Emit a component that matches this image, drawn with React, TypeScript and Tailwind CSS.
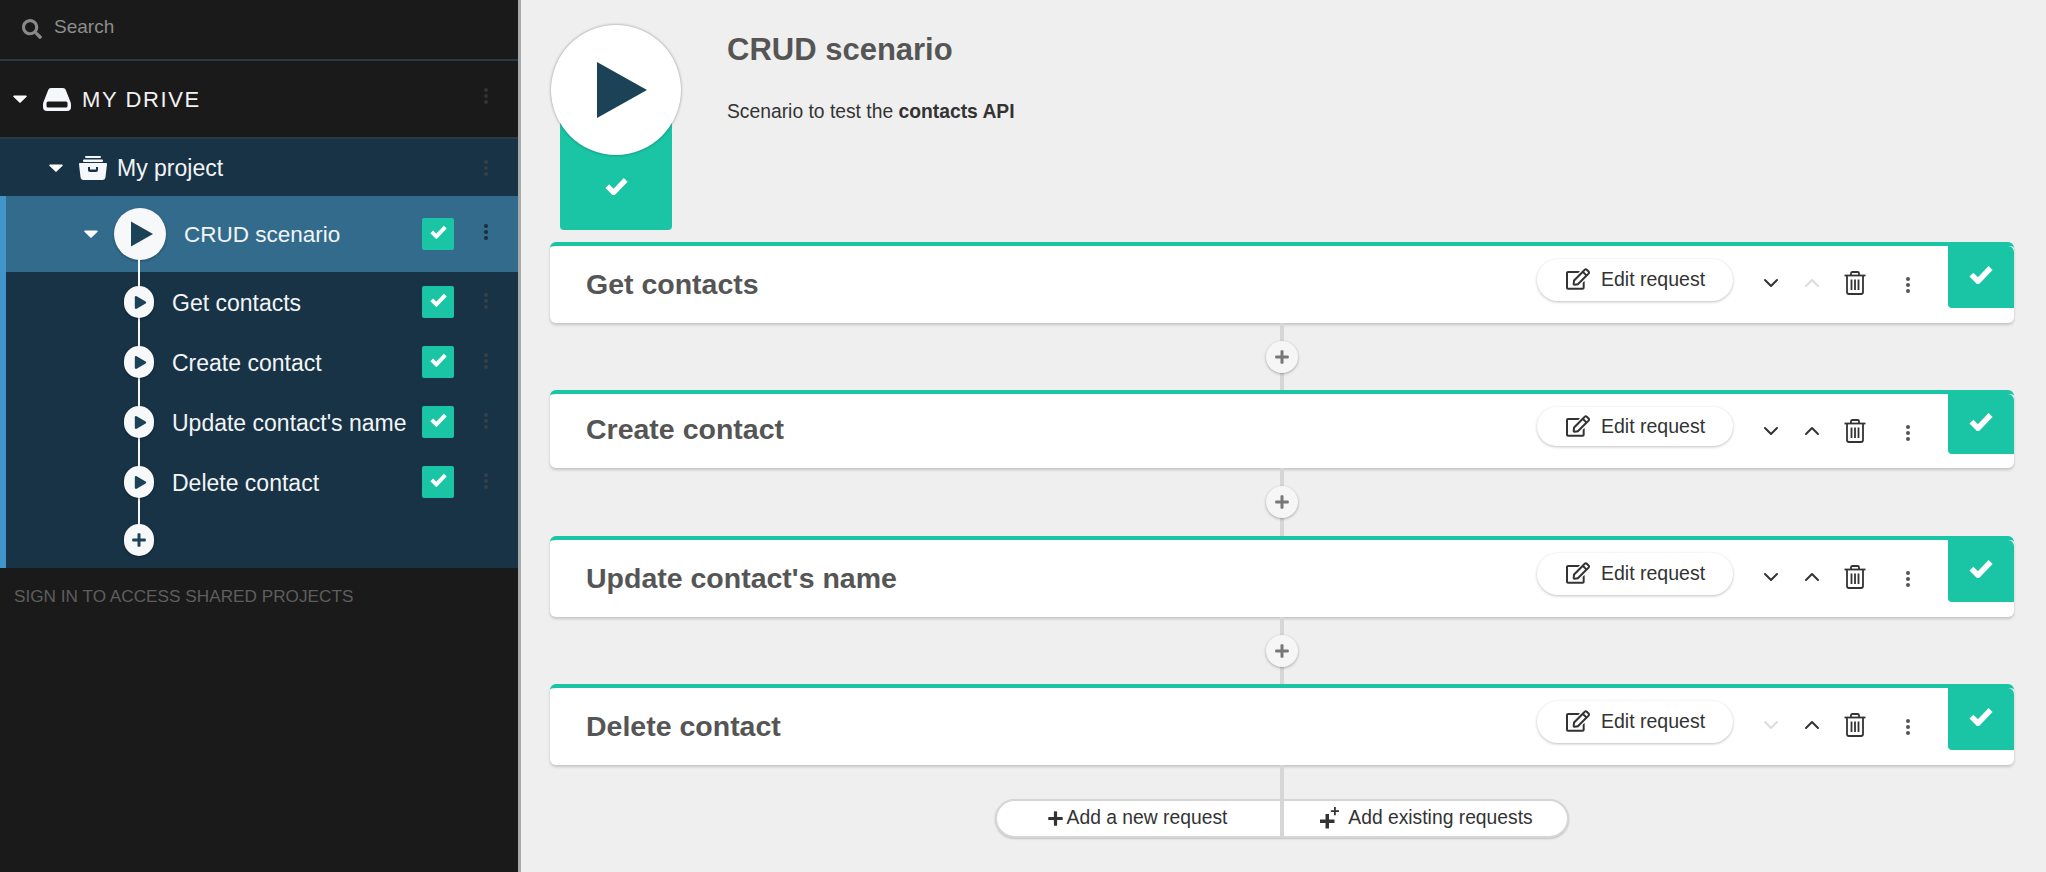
import { FaPlay, FaRegEdit, FaSearch } from "react-icons/fa";
import { ChevronDown, ChevronUp } from "lucide-react";

const sans = "font-['Liberation_Sans',Arial,sans-serif]";

const steps = ["Get contacts", "Create contact", "Update contact's name", "Delete contact"];

function Caret() {
  return (
    <svg width="14" height="8" viewBox="0 0 14 8" className="shrink-0">
      <path d="M1 0.5h12a.8.8 0 0 1 .6 1.3L7.6 7.6a.8.8 0 0 1-1.2 0L.4 1.8A.8.8 0 0 1 1 .5z" fill="#fff" />
    </svg>
  );
}

function Kebab({ color }: { color: string }) {
  return (
    <svg width="6" height="18" viewBox="0 0 6 18" fill={color}>
      <circle cx="3" cy="3" r="2" />
      <circle cx="3" cy="9" r="2" />
      <circle cx="3" cy="15" r="2" />
    </svg>
  );
}

function Plus({ size, color }: { size: number; color: string }) {
  return (
    <svg width={size} height={size} viewBox="0 0 14 14" fill={color}>
      <path d="M5.500 1a.8.8 0 0 1 .8-.8h1.400a.8.8 0 0 1 .8.8v4.500H13a.8.8 0 0 1 .8.8v1.400a.8.8 0 0 1-.8.8H8.500V13a.8.8 0 0 1-.8.8H6.300a.8.8 0 0 1-.8-.8V8.500H1a.8.8 0 0 1-.8-.8V6.300a.8.8 0 0 1 .8-.8h4.500z" />
    </svg>
  );
}

function Check({ size }: { size: number }) {
  return (
    <svg width={size} height={size * 0.8} viewBox="0 0 20 16" fill="none" stroke="#fff" strokeWidth="4.600">
      <path d="M2 8l5.500 5.500L18 2.500" />
    </svg>
  );
}

function DriveIcon() {
  return (
    <svg width="28" height="24" viewBox="0 0 28 24" fill="#f5f7fa">
      <path
        fillRule="evenodd"
        d="M8 1h12c1.300 0 2.300.7 2.800 2L27.500 15c.3.800.5 1.500.5 2.500V20a4 4 0 0 1-4 4H4a4 4 0 0 1-4-4v-2.500c0-1 .2-1.700.5-2.500L5.200 3C5.700 1.700 6.700 1 8 1zM5 14.500a1.500 1.500 0 0 0-1.500 1.500v3A1.500 1.500 0 0 0 5 20.500h18a1.500 1.500 0 0 0 1.500-1.500v-3a1.500 1.500 0 0 0-1.500-1.500z"
      />
    </svg>
  );
}

function ProjectIcon() {
  return (
    <svg width="28" height="24" viewBox="0 0 28 24" fill="#f5f7fa">
      <rect x="6" y="0" width="16" height="2" rx="1" />
      <rect x="4" y="3.500" width="20" height="2.500" rx="1" />
      <path
        fillRule="evenodd"
        d="M1 7h26c.6 0 1 .5 1 1l-1.500 13c-.2 1.700-1.400 3-3 3h-19c-1.600 0-2.800-1.300-3-3L0 8c0-.5.4-1 1-1zm8 4v3c0 1.100.9 2 2 2h6c1.100 0 2-.9 2-2v-3h-2v2.500h-6V11z"
      />
    </svg>
  );
}

function TrashIcon() {
  return (
    <svg width="22" height="24" viewBox="0 0 22 24" fill="none" stroke="#333" strokeWidth="1.800">
      <path d="M0.500 4.500h21" />
      <path d="M7 4.500V2.500c0-.8.6-1.500 1.400-1.500h5.200c.8 0 1.400.7 1.400 1.500v2" />
      <path d="M3 4.500v16.500c0 1.200.9 2 2 2h12c1.100 0 2-.8 2-2V4.500" />
      <path d="M7.500 8.500v10.500M11 8.500v10.500M14.500 8.500v10.500" />
    </svg>
  );
}

function AddExistingIcon() {
  return (
    <svg width="20" height="24" viewBox="0 0 20 24" fill="#333">
      <path d="M5.500 7h3.500v5.500h5.500V16H9v5.500H5.500V16H0v-3.500h5.500z" />
      <path d="M14 0h1.800v3.200H19v1.800h-3.200v3.200H14V5h-3.200V3.200H14z" />
    </svg>
  );
}

function CheckBox() {
  return (
    <div className="flex h-[32px] w-[32px] shrink-0 items-center justify-center rounded-[2px] bg-[#19c5a5] pb-[4px]">
      <Check size={17} />
    </div>
  );
}

function SideNode({ children }: { children: React.ReactNode }) {
  return (
    <div className="relative flex h-[32px] w-[30px] shrink-0 items-center justify-center rounded-full bg-[#f6f8fa] shadow-[0_1px_3px_rgba(0,0,0,0.35)]">
      {children}
    </div>
  );
}

function Sidebar() {
  return (
    <aside className="flex h-[872px] w-[521px] shrink-0 flex-col border-r-[3px] border-[#a9a9a9] bg-[#1a1a1a]">
      <div className="flex h-[61px] shrink-0 items-center gap-[12px] border-b-2 border-[#2b3a45] pb-[4px] pl-[22px]">
        <FaSearch size={20} color="#8a8a8a" className="mt-[3px]" />
        <span className="text-[19px] text-[#8d8d8d]">Search</span>
      </div>

      <div className="flex h-[78px] shrink-0 items-center border-b-2 border-[#2b3a45] pl-[13px] pr-[29px]">
        <Caret />
        <div className="ml-[16px]">
          <DriveIcon />
        </div>
        <span className="ml-[11px] flex-1 text-[22px] tracking-[1.600px] text-[#f2f2f2]">MY DRIVE</span>
        <div className="mb-[6px] opacity-80">
          <Kebab color="#3a3a3a" />
        </div>
      </div>

      <div className="flex h-[57px] shrink-0 items-center bg-[#193346] pl-[49px] pr-[29px]">
        <Caret />
        <div className="ml-[16px]">
          <ProjectIcon />
        </div>
        <span className="ml-[10px] mt-[2px] flex-1 text-[23px] text-[#f2f5f7]">My project</span>
        <Kebab color="#34404a" />
      </div>

      <div className="flex h-[372px] shrink-0 flex-col border-l-[6px] border-[#4195c8] bg-[#193346]">
        <div className="relative flex h-[76px] shrink-0 items-center bg-[#336b8c] pl-[78px] pr-[29px]">
          <Caret />
          <div className="ml-[16px] flex h-[52px] w-[52px] shrink-0 items-center justify-center rounded-full bg-[#f6f8fa] shadow-[0_1px_3px_rgba(0,0,0,0.3)]">
            <svg width="22" height="26" viewBox="0 0 22 26" className="ml-[3px]">
              <path d="M0 0.500L22 13 0 25.500z" fill="#1c4258" />
            </svg>
          </div>
          <span className="ml-[18px] mt-[1px] flex-1 text-[22.500px] text-[#f2f5f7]">CRUD scenario</span>
          <CheckBox />
          <div className="ml-[29px] mb-[4px]">
            <Kebab color="#1f2c36" />
          </div>
        </div>

        <div className="relative flex flex-col pl-[118px] pr-[29px] pt-[14px]">
          <div className="absolute left-[132px] top-[-13px] h-[280px] w-[2px] bg-[#f6f8fa]" />
          {steps.map((step) => (
            <div key={step} className="flex h-[60px] shrink-0 items-start">
              <SideNode>
                <FaPlay size={13} color="#1c4258" className="ml-[2px]" />
              </SideNode>
              <span className="ml-[18px] mt-[1px] flex-1 whitespace-nowrap text-[23px] leading-[32px] text-[#f2f5f7]">{step}</span>
              <CheckBox />
              <div className="ml-[29px] mt-[6px]">
                <Kebab color="#34404a" />
              </div>
            </div>
          ))}
          <div className="-mt-[2px]">
            <SideNode>
              <Plus size={14} color="#1c4258" />
            </SideNode>
          </div>
        </div>
      </div>

      <div className="pl-[14px] pt-[18px] text-[17.200px] leading-[20px] text-[#5e5e5e]">SIGN IN TO ACCESS SHARED PROJECTS</div>
    </aside>
  );
}

// the second card is a few pixels shorter than the others in the reference
function Card({ title, canDown, canUp, short }: { title: string; canDown: boolean; canUp: boolean; short: boolean }) {
  return (
    <div
      className={`flex items-stretch rounded-[6px] border-t-4 border-[#19c5a5] bg-white shadow-[0_2px_3px_rgba(0,0,0,0.18)] ${
        short ? "h-[78px]" : "h-[81px]"
      }`}
    >
      <h2 className={`flex-1 pl-[36px] text-[28.500px] font-bold leading-[30px] text-[#555] ${short ? "pt-[20px]" : "pt-[23px]"}`}>
        {title}
      </h2>
      <div
        className={`mt-[13px] flex w-[196px] items-center rounded-full bg-white pl-[29px] shadow-[0_1px_3px_rgba(0,0,0,0.25)] ${
          short ? "h-[39px]" : "h-[42px]"
        }`}
      >
        <FaRegEdit size={24} color="#333" className="-mt-[2px]" />
        <span className="ml-[11px] text-[19.500px] text-[#333]">Edit request</span>
      </div>
      <div className="mt-[22px] flex h-[30px] w-[215px] items-center pl-[26px]">
        <ChevronDown size={24} strokeWidth={2} color={canDown ? "#333" : "#dcdcdc"} />
        <ChevronUp size={24} strokeWidth={2} color={canUp ? "#333" : "#dcdcdc"} className="ml-[17px]" />
        <div className="ml-[20px]">
          <TrashIcon />
        </div>
        <div className="ml-[39px] mt-[3px]">
          <Kebab color="#555" />
        </div>
      </div>
      <div
        className={`flex w-[66px] items-center justify-center rounded-bl-[4px] rounded-tr-[6px] bg-[#19c5a5] pb-[5px] ${
          short ? "h-[60px]" : "h-[62px]"
        }`}
      >
        <Check size={24} />
      </div>
    </div>
  );
}

function Connector({ tall }: { tall: boolean }) {
  return (
    <div className={`relative mx-auto flex w-[4px] items-center justify-center bg-[#d6d6d6] ${tall ? "h-[68px]" : "h-[67px]"}`}>
      <div className="absolute flex h-[32px] w-[32px] items-center justify-center rounded-full bg-[#f6f6f6] shadow-[0_1px_3px_rgba(0,0,0,0.3)]">
        <Plus size={14} color="#777" />
      </div>
    </div>
  );
}

export default function App() {
  return (
    <div className={`flex h-[872px] w-[2046px] overflow-hidden bg-[#efefef] ${sans}`}>
      <Sidebar />
      <main className="flex min-w-0 flex-1 flex-col pl-[29px] pr-[32px]">
        <div className="flex h-[242px] shrink-0">
          <div className="relative ml-[10px] mt-[100px] h-[130px] w-[112px] shrink-0 rounded-b-[4px] bg-[#19c5a5]">
            <div className="absolute bottom-[35px] left-0 flex w-full justify-center">
              <Check size={23} />
            </div>
            <div className="absolute left-[-9px] top-[-75px] flex h-[130px] w-[130px] items-center justify-center rounded-full bg-white shadow-[0_0_3px_rgba(0,0,0,0.4)]">
              <svg width="52" height="58" viewBox="0 0 52 58" className="ml-[12px]">
                <path d="M1 1L51 29 1 57z" fill="#1c4258" />
              </svg>
            </div>
          </div>
          <div className="ml-[55px] pt-[32px]">
            <h1 className="text-[31px] font-bold leading-[36px] text-[#555]">CRUD scenario</h1>
            <p className="mt-[32px] text-[19.300px] leading-[24px] text-[#333]">
              Scenario to test the <strong>contacts API</strong>
            </p>
          </div>
        </div>

        {steps.map((step, i) => (
          <div key={step}>
            <Card title={step} canDown={i < steps.length - 1} canUp={i > 0} short={i === 1} />
            {i < steps.length - 1 && <Connector tall={i === 1} />}
          </div>
        ))}

        <div className="relative mx-auto h-[34px] w-[4px] bg-[#d6d6d6]" />
        <div className="mx-auto flex h-[39px] w-[574px] shrink-0 items-stretch rounded-full border-2 border-[#d6d6d6] bg-white text-[19.300px] text-[#333] shadow-[0_1px_2px_rgba(0,0,0,0.2)]">
          <div className="flex w-[287px] items-center justify-center gap-[4px] border-r-4 border-[#d6d6d6] pr-[2px]">
            <Plus size={15} color="#333" />
            <span>Add a new request</span>
          </div>
          <div className="flex flex-1 items-center justify-center gap-[8px] pl-[2px]">
            <AddExistingIcon />
            <span>Add existing requests</span>
          </div>
        </div>
      </main>
    </div>
  );
}
